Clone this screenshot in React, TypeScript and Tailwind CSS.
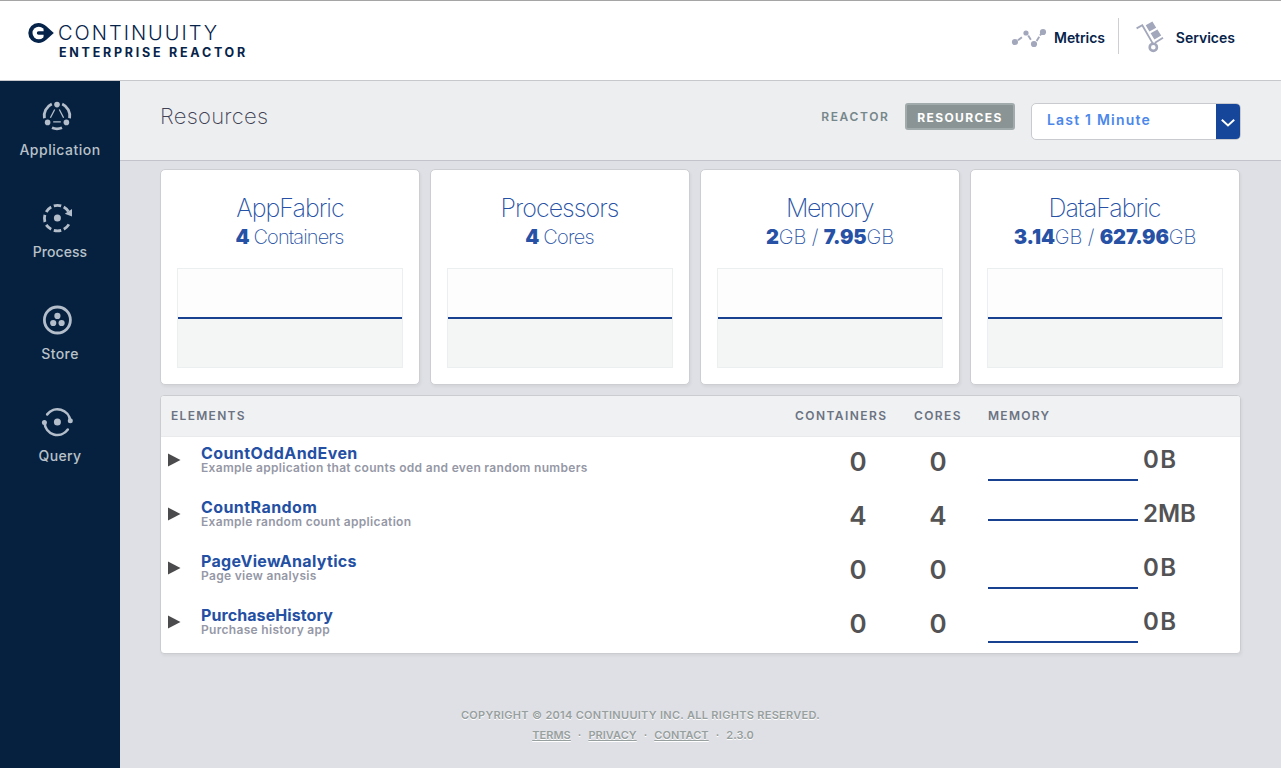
import type { ReactNode } from "react";

type Card = { title: string; titleCls: string; valueCls: string; parts: [string, boolean][]; width: string };

const cards: Card[] = [
  { title: "AppFabric", titleCls: "tracking-[-1px]", valueCls: "tracking-[-0.9px] pr-px", parts: [["4", true], [" Containers", false]], width: "w-[260px]" },
  { title: "Processors", titleCls: "tracking-[-0.95px] pr-px", valueCls: "tracking-[-0.8px] pr-px", parts: [["4", true], [" Cores", false]], width: "w-[260px]" },
  { title: "Memory", titleCls: "tracking-[-1.5px] pr-px", valueCls: "tracking-[-0.15px]", parts: [["2", true], ["GB / ", false], ["7.95", true], ["GB", false]], width: "w-[260px]" },
  { title: "DataFabric", titleCls: "tracking-[-1px] pr-px", valueCls: "tracking-[-0.15px]", parts: [["3.14", true], ["GB / ", false], ["627.96", true], ["GB", false]], width: "w-[270px]" },
];

const rows = [
  { name: "CountOddAndEven", nameCls: "tracking-[0.42px]", desc: "Example application that counts odd and even random numbers", n: 0, mem: "0B", line: "pt-[42px]" },
  { name: "CountRandom", nameCls: "tracking-[0.42px]", desc: "Example random count application", n: 4, mem: "2MB", line: "pt-[28px]" },
  { name: "PageViewAnalytics", nameCls: "tracking-[0.32px]", desc: "Page view analysis", n: 0, mem: "0B", line: "pt-[42px]" },
  { name: "PurchaseHistory", nameCls: "tracking-[0.08px]", desc: "Purchase history app", n: 0, mem: "0B", line: "pt-[42px]" },
];

function ApplicationIcon() {
  return (
    <svg width="32" height="32" viewBox="0 0 32 32" fill="none" stroke="#b4becb" strokeWidth="2.8">
      <path d="M10.8 4A13 13 0 0 0 3.4 18.2M21.2 4A13 13 0 0 1 28.6 18.2M11 27.8A13 13 0 0 0 21 27.8" />
      <g fill="#b4becb" stroke="none">
        <circle cx="16" cy="4.6" r="2.8" />
        <circle cx="6.6" cy="22.4" r="2.8" />
        <circle cx="25.4" cy="22.4" r="2.8" />
      </g>
      <path strokeWidth="1.3" d="M13.7 9.5L9.4 17.8M18.3 9.5L22.6 17.8M12.2 21.8H19.8" />
    </svg>
  );
}

function ProcessIcon() {
  return (
    <svg width="32" height="32" viewBox="0 0 32 32" fill="none" stroke="#b4becb" strokeWidth="2.8">
      <path d="M12.8 3.9A12.9 12.9 0 0 1 20.2 3.9M10.2 5A13 13 0 0 0 5.2 10M3.9 12.8A13 13 0 0 0 3.9 20M5.2 22.9A13 13 0 0 0 10.2 27.2M12.8 28.3A13 13 0 0 0 20.2 28.3M22.8 27.2A13 13 0 0 0 27.9 22.4M22.7 5.1A13 13 0 0 1 27.4 9.5" />
      <path fill="#b4becb" stroke="none" d="M31 7V14.4L23.8 11.8Z" />
      <circle cx="16.4" cy="16" r="3.5" fill="#b4becb" stroke="none" />
    </svg>
  );
}

function StoreIcon() {
  return (
    <svg width="32" height="32" viewBox="0 0 32 32" fill="none" stroke="#b4becb" strokeWidth="2.8">
      <circle cx="16.4" cy="16" r="13" />
      <g fill="#b4becb" stroke="none">
        <circle cx="16.4" cy="11.9" r="3.1" />
        <circle cx="12.2" cy="19" r="3.1" />
        <circle cx="20.6" cy="19" r="3.1" />
      </g>
    </svg>
  );
}

function QueryIcon() {
  return (
    <svg width="32" height="32" viewBox="0 0 32 32" fill="none" stroke="#b4becb" strokeWidth="2.6" strokeLinecap="round">
      <path d="M6.2 8.4A12.8 12.8 0 0 1 29.2 14.8M26.8 23.6A12.8 12.8 0 0 1 3.6 16.6" />
      <g fill="#b4becb" stroke="none">
        <circle cx="16.4" cy="16" r="3.5" />
        <circle cx="29.3" cy="14.8" r="2.5" />
        <circle cx="3.4" cy="16.4" r="2.5" />
      </g>
    </svg>
  );
}

function Chevron() {
  return (
    <svg width="14" height="8" viewBox="0 0 14 8" fill="none" stroke="#fff" strokeWidth="2">
      <path d="M0.8 0.8L7 6.4L13.2 0.8" />
    </svg>
  );
}

function NavItem({ icon, label, cls }: { icon: ReactNode; label: string; cls: string }) {
  return (
    <a className="flex h-[102px] flex-col items-center pt-[19px]">
      <div className="-ml-[6px] h-8 w-8">{icon}</div>
      <span className={`mt-2 text-[14px] leading-5 font-medium text-[#b9c1c9] ${cls}`}>{label}</span>
    </a>
  );
}

function Chart() {
  return (
    <div className="flex h-[100px] flex-col border border-[#ecefef] bg-[#fdfdfd] pt-12">
      <div className="h-[2px] shrink-0 bg-[#184290]" />
      <div className="grow bg-[#f4f6f5]" />
    </div>
  );
}

export default function App() {
  return (
    <div className="flex h-[768px] w-[1281px] flex-col overflow-hidden bg-[#dfe0e5] font-['Inter','Liberation_Sans',sans-serif] whitespace-nowrap">
      <header className="flex h-[81px] shrink-0 justify-between border-t border-b border-t-[#a5a5a5] border-b-[#c7c8cc] bg-white">
        <div className="flex pt-[22px] pl-7">
          <svg width="26" height="20" viewBox="0 0 26 20" className="shrink-0">
            <path fill="#06234a" d="M10.3 0C13.6 0 16.2 1.3 18.3 3.2L25.8 10L18.3 16.8C16.2 18.7 13.6 20 10.3 20A10 10 0 0 1 10.3 0Z" />
            <circle cx="10.8" cy="10" r="6.3" fill="#fff" />
            <path fill="#06234a" d="M10.6 8.2H15.6V5.6L19.4 8V12L15.6 14.4V11.8H10.6A1.8 1.8 0 0 1 10.6 8.2Z" />
          </svg>
          <div className="flex flex-col pl-1 text-[#06234a]">
            <span className="h-5 text-[20px] leading-5 font-light tracking-[2px]">CONTINUUITY</span>
            <span className="mt-[2px] ml-px text-[12.5px] leading-4 font-bold tracking-[2.75px]">ENTERPRISE REACTOR</span>
          </div>
        </div>
        <nav className="flex pr-[46px] text-[14px] leading-5 font-semibold text-[#06234a]">
          <a className="mt-[17px] flex h-9 items-center border-r border-[#cfcfd3] pt-1 pr-[13px] tracking-[-0.08px]">
            <svg width="36" height="20" viewBox="0 0 36 20" className="mr-[7px]">
              <path stroke="#a3a7bb" strokeWidth="1.9" fill="none" d="M7 12.3L11.4 8.8M17.2 7.6L20.4 12.6M25.6 13L30.6 5" strokeDasharray="5 1.5" />
              <g fill="#a3a7bb">
                <circle cx="4" cy="14" r="3.1" />
                <circle cx="15" cy="5" r="2.6" />
                <circle cx="23" cy="16" r="3.1" />
                <circle cx="32" cy="4" r="3.1" />
              </g>
            </svg>
            Metrics
          </a>
          <a className="mt-[17px] flex h-9 items-center pt-1 pl-[16px]">
            <svg width="30" height="32" viewBox="0 0 30 32" className="-mt-[2px] mr-[11px]" fill="none" stroke="#a3a7bb">
              <path strokeWidth="1.8" d="M1.6 7.4L7.3 4.2L17.7 22.4M20 21.8L28 16.8" />
              <circle cx="18.3" cy="26.3" r="3.6" strokeWidth="2.6" />
              <path fill="#a3a7bb" stroke="none" d="M10.7 4.3L17.4 0.6L21.2 6.8L14.4 10.6ZM15.6 12.2L22.4 8.6L26.2 14.6L19.4 18.6Z" />
            </svg>
            Services
          </a>
        </nav>
      </header>

      <div className="flex grow">
        <aside className="w-[120px] shrink-0 bg-[#06213f]">
          <NavItem icon={<ApplicationIcon />} label="Application" cls="tracking-[0.5px]" />
          <NavItem icon={<ProcessIcon />} label="Process" cls="tracking-[0.05px]" />
          <NavItem icon={<StoreIcon />} label="Store" cls="tracking-[0.4px]" />
          <NavItem icon={<QueryIcon />} label="Query" cls="tracking-[0.35px]" />
        </aside>

        <main className="flex grow flex-col">
          <div className="flex h-20 shrink-0 justify-between border-b border-[#c3c4cb] bg-[#edeef0] pr-10 pl-10">
            <h1 className="pt-[19px] text-[22px] leading-8 font-extralight tracking-[0.25px] text-[#3f4254]">Resources</h1>
            <div className="flex pt-[22px]">
              <span className="mt-[5px] text-[12px] leading-[18px] font-semibold tracking-[1.65px] text-[#76878b]">REACTOR</span>
              <span className="ml-[15.5px] flex h-[27px] w-[110px] items-center justify-center rounded-[3px] border-2 border-[#a1abab] bg-[#8b9494] pt-[2px] text-[12px] font-bold tracking-[1.4px] text-white">RESOURCES</span>
              <div className="ml-4 flex h-[37px] w-[210px] overflow-hidden rounded-[5px] border border-[#c8cacf] bg-white">
                <span className="grow pt-[6px] pl-[15px] text-[14px] leading-5 font-semibold tracking-[1.2px] text-[#4c87ea]">Last 1 Minute</span>
                <span className="-mr-px flex w-[25px] items-center justify-center bg-[#16469a] pt-[2px] pr-px"><Chevron /></span>
              </div>
            </div>
          </div>

          <section className="flex gap-[10px] pt-2 pl-10">
            {cards.map((c) => (
              <div key={c.title} className={`flex h-[216px] shrink-0 flex-col rounded-[5px] border border-[#cdced2] bg-white px-4 pt-[22px] text-[#2651a5] shadow-[1px_2px_3px_rgba(0,0,0,0.05)] ${c.width}`}>
                <div className={`text-center text-[25px] leading-8 font-extralight ${c.titleCls}`}>{c.title}</div>
                <div className={`mb-[18px] text-center text-[20px] leading-[26px] font-extralight whitespace-pre ${c.valueCls}`}>
                  {c.parts.map(([t, b]) => (b ? <b key={t} className="font-black">{t}</b> : <span key={t}>{t}</span>))}
                </div>
                <Chart />
              </div>
            ))}
          </section>

          <section className="mt-[10px] ml-10 flex h-[259px] w-[1081px] shrink-0 flex-col overflow-hidden rounded-[4px] border border-[#cbccd0] bg-white shadow-[1px_2px_3px_rgba(0,0,0,0.05)]">
            <div className="flex h-[41px] shrink-0 border-b border-[#e8eaeb] bg-[#f0f1f3] pt-[11px] pl-[10px] text-[12px] leading-[18px] font-semibold tracking-[1.3px] text-[#6b7382]">
              <span className="w-[624px]">ELEMENTS</span>
              <span className="w-[119px] tracking-[1.45px]">CONTAINERS</span>
              <span className="w-[74px] tracking-[1.4px]">CORES</span>
              <span>MEMORY</span>
            </div>
            {rows.map((r) => (
              <div key={r.name} className="flex h-[54px] shrink-0">
                <svg width="13" height="14" viewBox="0 0 13 14" className="mt-4 ml-[7px]">
                  <path fill="#4b4b4d" d="M0 0.5L12.5 7L0 13.5Z" />
                </svg>
                <div className="flex w-[637px] flex-col pt-[7px] pl-5">
                  <span className={`text-[16px] leading-[18px] font-bold text-[#2450a4] ${r.nameCls}`}>{r.name}</span>
                  <span className="-mt-px text-[12px] leading-[14px] font-semibold tracking-[0.31px] text-[#9598a6]">{r.desc}</span>
                </div>
                <span className="w-20 pt-[9px] text-center text-[26px] leading-8 font-semibold text-[#535355]">{r.n}</span>
                <span className="w-20 pt-[9px] text-center text-[26px] leading-8 font-semibold text-[#535355]">{r.n}</span>
                <div className={`ml-[10px] w-[150px] ${r.line}`}>
                  <div className="h-[2px] bg-[#184290]" />
                </div>
                <span className={`pt-[7px] pl-[5px] text-[24px] leading-8 font-semibold text-[#535355] ${r.mem === "0B" ? "tracking-[1.5px]" : ""}`}>{r.mem}</span>
              </div>
            ))}
          </section>

          <footer className="mt-[51px] mr-[1px] flex flex-col items-center text-[11px] leading-5 font-semibold text-[#979f9f] [text-shadow:0_1px_0_#fff]">
            <div className="-ml-[119px] tracking-[0.29px]">COPYRIGHT © 2014 CONTINUUITY INC. ALL RIGHTS RESERVED.</div>
            <div className="-ml-[114px] flex gap-[7px] tracking-[0.04px]">
              <span className="underline">TERMS</span><span>·</span>
              <span className="underline">PRIVACY</span><span>·</span>
              <span className="underline">CONTACT</span><span>·</span>
              <span>2.3.0</span>
            </div>
          </footer>
        </main>
      </div>
    </div>
  );
}
